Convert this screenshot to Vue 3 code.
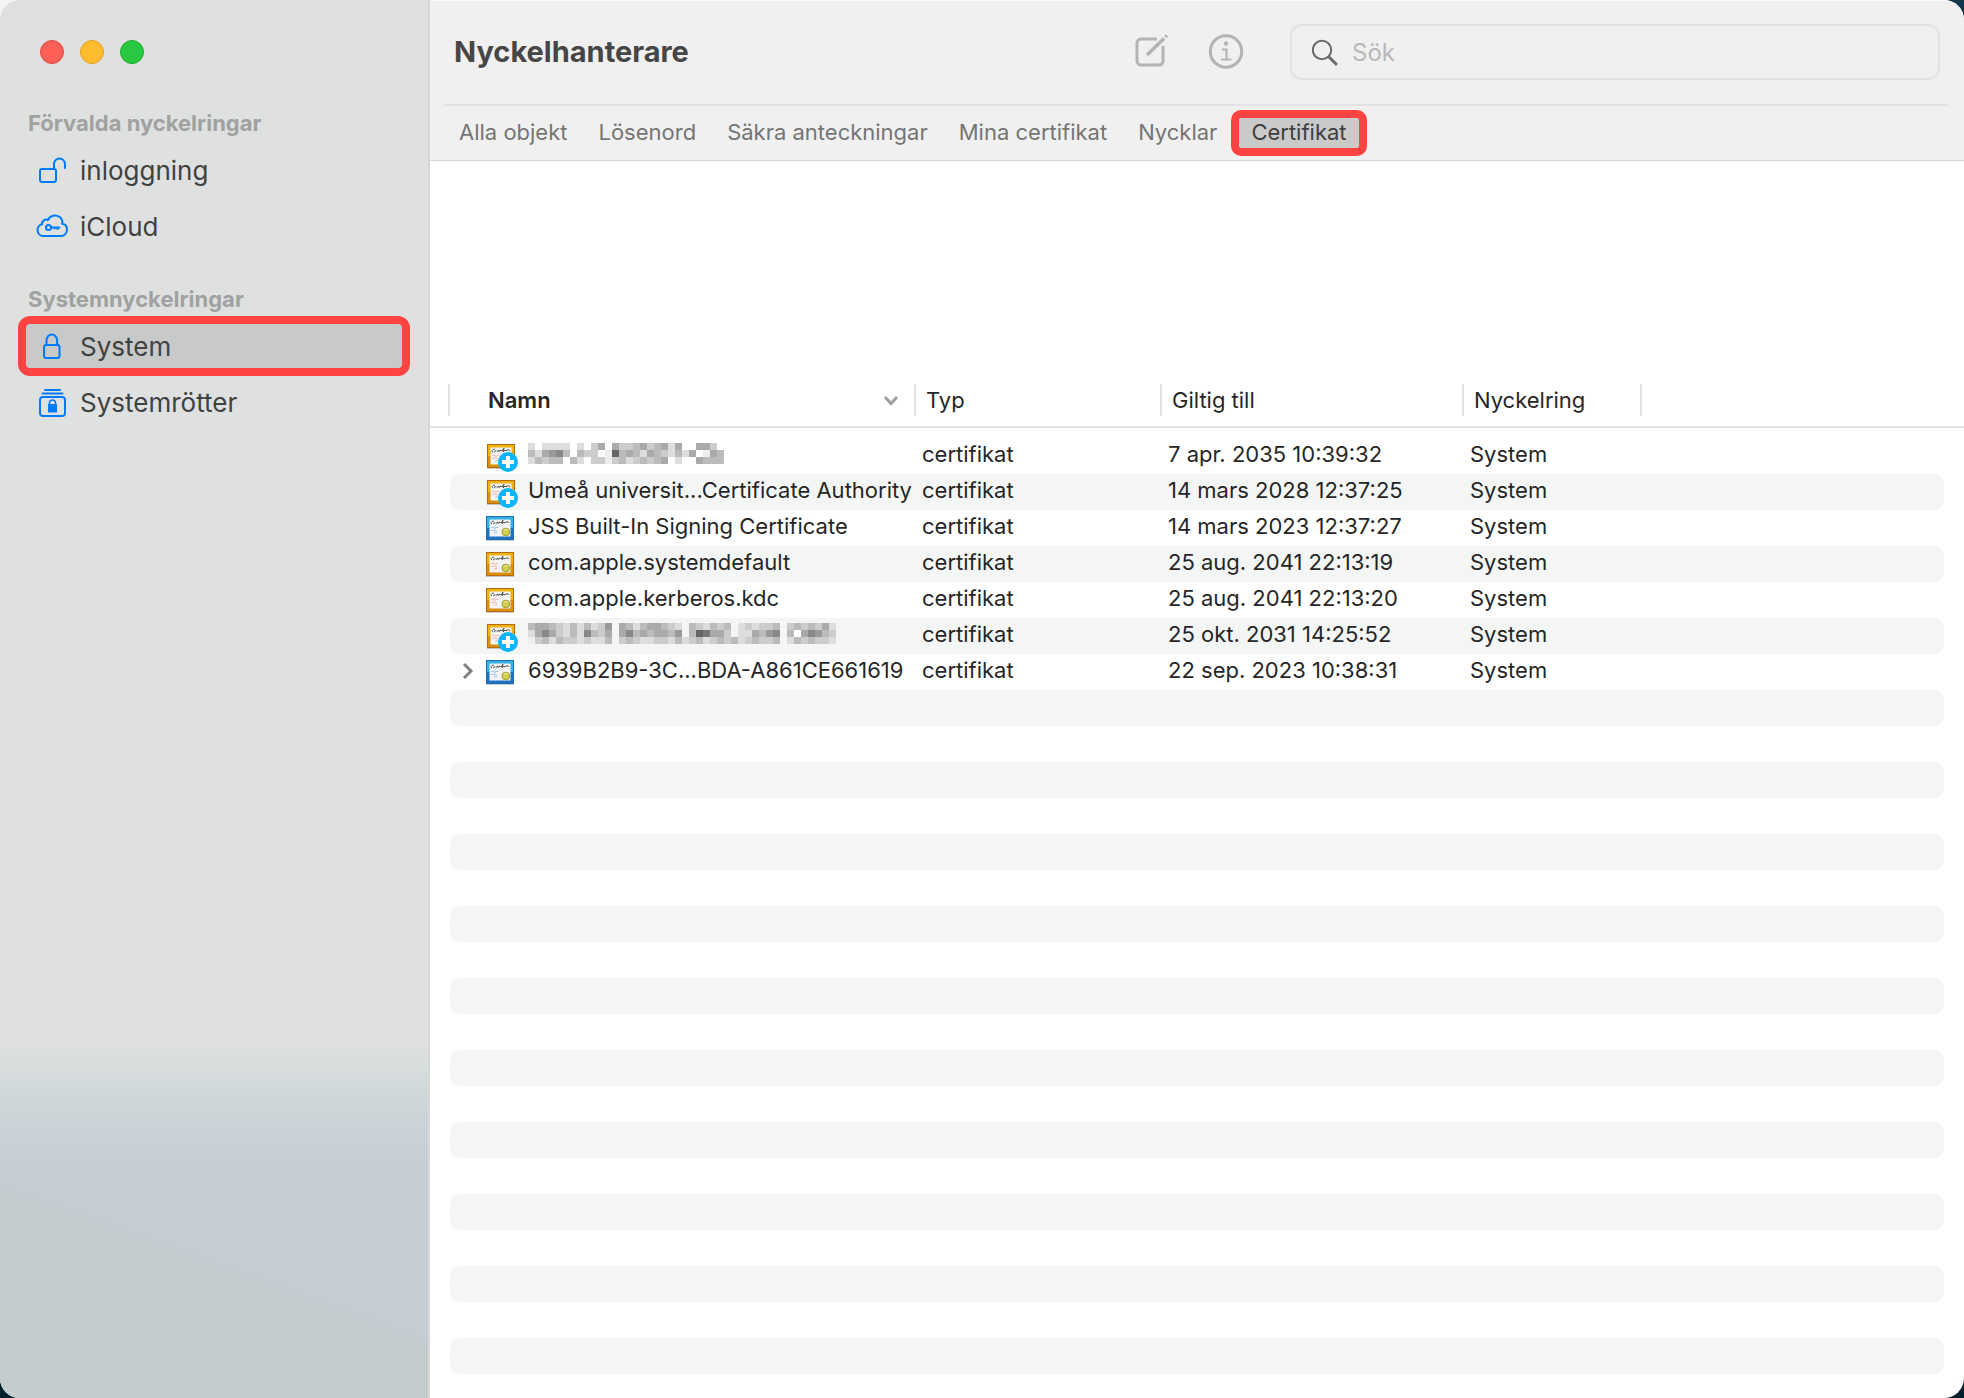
<script setup>
import { ref } from 'vue'

const keychainGroups = [
  {
    title: 'Förvalda nyckelringar',
    items: [
      { label: 'inloggning', icon: 'unlocked' },
      { label: 'iCloud', icon: 'cloud' },
    ],
  },
  {
    title: 'Systemnyckelringar',
    items: [
      { label: 'System', icon: 'locked' },
      { label: 'Systemrötter', icon: 'roots' },
    ],
  },
]

const categories = ['Alla objekt', 'Lösenord', 'Säkra anteckningar', 'Mina certifikat', 'Nycklar', 'Certifikat']

const activeKeychain = ref('System')
const activeCategory = ref('Certifikat')
const query = ref('')

// Each hex digit is the grey level of one mosaic tile; a space leaves the tile clear.
const certificates = [
  {
    mosaic: [
      'd dddd d cafaccbacbadaf aacf',
      'bda98b bcc e6babdabcdbdafeab',
      'dbcbb bd ccecbdcbcba d  abbb',
    ],
    tone: 'gold', trusted: true, expires: '7 apr. 2035 10:39:32',
  },
  { name: 'Umeå universit...Certificate Authority', tone: 'gold', trusted: true, expires: '14 mars 2028 12:37:25' },
  { name: 'JSS Built-In Signing Certificate', tone: 'blue', expires: '14 mars 2023 12:37:27' },
  { name: 'com.apple.systemdefault', tone: 'gold', expires: '25 aug. 2041 22:13:19' },
  { name: 'com.apple.kerberos.kdc', tone: 'gold', expires: '25 aug. 2041 22:13:20' },
  {
    mosaic: [
      'baabcdbdbdc9 abdbaabcd bcdbcb dcdccb cbcbcad',
      'da8acdbd8bca a8babaab9 b67aac ddab98 bfa89bcd',
      'ecbdbccdcddb cbcddccdbdcbdcbcbdcbccb dbcbccdd',
    ],
    tone: 'gold', trusted: true, expires: '25 okt. 2031 14:25:52',
  },
  { name: '6939B2B9-3C...BDA-A861CE661619', tone: 'blue', expandable: true, expires: '22 sep. 2023 10:38:31' },
]

const emptyRows = 19

const grey = (digit) => `#${(digit + digit).repeat(3)}`
</script>

<template>
  <div class="window">
    <aside class="sidebar">
      <div class="lights">
        <button class="light close" type="button" aria-label="Stäng"></button>
        <button class="light minimise" type="button" aria-label="Minimera"></button>
        <button class="light zoom" type="button" aria-label="Zooma"></button>
      </div>

      <nav v-for="group in keychainGroups" :key="group.title" class="group" :aria-label="group.title">
        <h2 class="group-title">{{ group.title }}</h2>
        <button
          v-for="item in group.items"
          :key="item.label"
          type="button"
          class="keychain"
          :class="{ active: item.label === activeKeychain }"
          @click="activeKeychain = item.label"
        >
          <svg v-if="item.icon === 'unlocked'" class="keychain-icon" viewBox="0 0 32 32">
            <rect x="4" y="15" width="16" height="13" rx="2" />
            <path d="M18 15v-5a5.500 5.500 0 0 1 11 0v4" />
          </svg>
          <svg v-else-if="item.icon === 'cloud'" class="keychain-icon" viewBox="0 0 32 32">
            <path d="M7 26a6 6 0 0 1-1-11.800c-.2-3.400 3.200-5.400 6-4.200 2-4.500 7.500-5.800 11.400-3.200 2.400 1.700 3.200 4.300 2.800 7 3 .5 4.800 2.800 4.800 5.600 0 3.600-2.500 6.600-6 6.600z" />
            <circle cx="12.500" cy="17.500" r="2.500" />
            <path d="M15 17.500h8.500M21.500 17.500v1.500M18.500 17.500v1" />
          </svg>
          <svg v-else-if="item.icon === 'locked'" class="keychain-icon" viewBox="0 0 32 32">
            <rect x="8" y="15" width="15.500" height="13" rx="2" />
            <path d="M10.500 15v-4.500a5.300 6 0 0 1 10.600 0V15" />
          </svg>
          <svg v-else class="keychain-icon" viewBox="0 0 32 32">
            <rect x="4" y="11" width="25" height="19" rx="3" />
            <path d="M6.500 7.500h20M9 4h15" />
            <path class="solid" d="M12 18h9v8.500h-9z" />
            <path d="M13.500 18v-1a3 3 0 0 1 6 0v1" stroke-width="1.500" />
          </svg>
          <span>{{ item.label }}</span>
        </button>
      </nav>
    </aside>

    <main class="main">
      <header class="header">
        <div class="titlebar">
          <h1 class="title">Nyckelhanterare</h1>
          <div class="tools">
            <button class="tool" type="button" aria-label="Nytt objekt">
              <svg viewBox="0 0 36 36">
                <path d="M23 5H7a4 4 0 0 0-4 4v18a4 4 0 0 0 4 4h18a4 4 0 0 0 4-4V12" />
                <path d="M13 21 30 4.500" stroke-width="3.500" />
                <path d="m31.500 3 1.500-1.500" stroke-width="3.500" />
              </svg>
            </button>
            <button class="tool" type="button" aria-label="Information">
              <svg viewBox="0 0 36 36">
                <circle cx="18" cy="17.500" r="15.700" />
                <circle class="dot" cx="18" cy="9.500" r="2.200" />
                <path d="M14 15.500h4.500v10M13 25.500h10.500" stroke-width="2" />
              </svg>
            </button>
          </div>
          <label class="search">
            <svg class="search-icon" viewBox="0 0 28 28">
              <circle cx="10" cy="12" r="9.200" />
              <path d="m17 19 7 7" stroke-width="3" />
            </svg>
            <input v-model="query" type="search" placeholder="Sök" aria-label="Sök" />
          </label>
        </div>
        <div class="categories">
          <button
            v-for="category in categories"
            :key="category"
            type="button"
            class="category"
            :class="{ active: category === activeCategory }"
            @click="activeCategory = category"
          >{{ category }}</button>
        </div>
      </header>

      <section class="listing">
        <table class="table">
          <colgroup>
            <col class="col-name" /><col class="col-kind" /><col class="col-date" /><col class="col-ring" /><col />
          </colgroup>
          <thead>
            <tr>
              <th scope="col">
                <div class="heading name-heading">
                  Namn
                  <svg class="sort" viewBox="0 0 16 12"><path d="m2 3 6 6.500L14 3" /></svg>
                </div>
              </th>
              <th scope="col"><div class="heading">Typ</div></th>
              <th scope="col"><div class="heading">Giltig till</div></th>
              <th scope="col"><div class="heading">Nyckelring</div></th>
              <td class="rule"></td>
            </tr>
          </thead>
          <tbody>
            <tr v-for="(cert, index) in certificates" :key="index">
              <td>
                <div class="name-cell">
                  <button v-if="cert.expandable" class="disclosure" type="button" aria-label="Visa mer">
                    <svg viewBox="0 0 12 18"><path d="m2 2 7 7-7 7" /></svg>
                  </button>
                  <svg class="cert" :class="cert.tone" viewBox="0 0 32 28">
                    <g :transform="cert.trusted ? 'translate(1 0)' : null">
                      <rect class="shade" x="0" y="1" width="28" height="24" />
                      <rect class="edge" x="0" y="0" width="28" height="24" />
                      <rect class="frame-top" x="1" y="1" width="26" height="11" />
                      <rect class="frame-bottom" x="1" y="12" width="26" height="11" />
                      <rect class="paper" x="3.500" y="3.500" width="21" height="17" />
                      <path class="script" d="M6 8c-2-1 0-3 2-3M7 8l2-1.500 1 1 2-1.500v1.500l2-1.500 1 1 2-3-1 4 2-2 1 1 2-1.500 2 1.500" />
                      <path class="lines" d="M5 12l2-1 2 1.500 2-1.500 1 1M5 14.500l3-.5 3 1M8 17l3-.5" />
                      <circle class="seal" cx="19.800" cy="16" r="3.800" />
                      <path class="shine" d="M17.500 14.500a3 3 0 0 1 4.500 0" />
                    </g>
                    <g v-if="cert.trusted">
                      <circle class="badge" cx="22" cy="18" r="10" />
                      <path class="plus" d="M22 12v12M16 18h12" />
                    </g>
                  </svg>
                  <svg
                    v-if="cert.mosaic"
                    class="mosaic"
                    :viewBox="`0 0 ${cert.mosaic[0].length * 7} 21`"
                    :width="cert.mosaic[0].length * 7"
                    height="21"
                    role="img"
                    aria-label="Dolt namn"
                  >
                    <template v-for="(line, y) in cert.mosaic" :key="y">
                      <template v-for="(tile, x) in line" :key="x">
                        <rect v-if="tile !== ' '" :x="x * 7" :y="y * 7" width="7" height="7" :fill="grey(tile)" />
                      </template>
                    </template>
                  </svg>
                  <span v-else>{{ cert.name }}</span>
                </div>
              </td>
              <td>certifikat</td>
              <td>{{ cert.expires }}</td>
              <td>System</td>
              <td></td>
            </tr>
            <tr v-for="n in emptyRows" :key="`empty-${n}`" aria-hidden="true">
              <td></td><td></td><td></td><td></td><td></td>
            </tr>
          </tbody>
        </table>
      </section>
    </main>
  </div>
</template>

<style>
body {
  margin: 0;
  background:
    linear-gradient(90deg, #f4f4f4 50%, #14364b 50%) top / 100% 50% no-repeat,
    #04202b;
}
</style>

<style scoped>
.window {
  display: flex;
  min-height: 100vh;
  box-sizing: border-box;
  border-radius: 20px;
  overflow: hidden;
  background: #fff;
  color: #262626;
  font-family: Inter, "Liberation Sans", sans-serif;
  font-size: 22px;
}

button {
  margin: 0;
  padding: 0;
  border: 0;
  background: none;
  color: inherit;
  font: inherit;
}

svg {
  display: block;
  flex: none;
  fill: none;
}

.sidebar {
  flex: none;
  width: 428px;
  border-right: 2px solid #d6d8d7;
  background:
    linear-gradient(20deg, #c5ccce 56%, rgba(197, 204, 206, 0) 60%) bottom / 100% 210px no-repeat,
    linear-gradient(#dfe1e0 0, #dfe1e0 1045px, #cfd7d9 1095px, #c7d1d6 1145px, #c5ccd4 1190px);
}

.lights {
  display: flex;
  gap: 16px;
  padding: 40px 40px 42px;
}

.light {
  width: 24px;
  height: 24px;
  border-radius: 50%;
  border: 1px solid;
}

.close { background: #ff5f57; border-color: #e2463f; }
.minimise { background: #febc2e; border-color: #e0a01f; }
.zoom { background: #28c840; border-color: #1faa2c; }

.group {
  display: flex;
  flex-direction: column;
  padding: 0 18px;
  margin-bottom: 30px;
}

.group-title {
  margin: 0;
  padding-left: 10px;
  line-height: 34px;
  font-size: 22px;
  font-weight: 700;
  color: #a0a2a1;
}

.keychain {
  display: flex;
  align-items: center;
  gap: 12px;
  height: 60px;
  margin-bottom: -4px;
  padding: 0 10px;
  border: 8px solid transparent;
  border-radius: 12px;
  font-size: 26px;
  text-align: left;
  color: #404141;
}

.keychain.active {
  border-color: #ff4343;
  background: #c8c9c9;
}

.keychain-icon {
  width: 32px;
  height: 32px;
  stroke: #007aff;
  stroke-width: 2;
  stroke-linecap: round;
}

.keychain-icon .solid {
  fill: #007aff;
  stroke: none;
}

.main {
  flex: 1;
  min-width: 0;
}

.header {
  border-top: 1px solid #fafafa;
  border-bottom: 1px solid #d8d8d8;
  background: #f0f0f0;
}

.titlebar {
  display: flex;
  align-items: center;
  height: 101px;
  margin: 0 16px 0 14px;
  padding: 0 8px 2px 10px;
  border-bottom: 2px solid #e2e2e2;
}

.title {
  flex: 1;
  margin: 0;
  font-size: 29px;
  font-weight: 700;
  color: #464646;
}

.tools {
  display: flex;
  gap: 38px;
  margin-right: 46px;
}

.tool svg {
  width: 36px;
  height: 36px;
  stroke: #b3b3b3;
  stroke-width: 3;
}

.tool .dot {
  fill: #b3b3b3;
  stroke: none;
}

.search {
  display: flex;
  align-items: center;
  gap: 12px;
  width: 650px;
  height: 56px;
  padding: 0 20px;
  box-sizing: border-box;
  border: 2px solid #e2e2e2;
  border-radius: 12px;
}

.search-icon {
  width: 28px;
  height: 28px;
  stroke: #6a6a6a;
  stroke-width: 2;
  stroke-linecap: round;
}

.search input {
  flex: 1;
  min-width: 0;
  padding: 2px 0 0;
  border: 0;
  outline: 0;
  background: none;
  font: inherit;
  font-size: 24px;
  color: #464646;
}

.search input::placeholder {
  color: #b8b8b8;
}

.categories {
  display: flex;
  align-items: center;
  gap: 1px;
  height: 54px;
  padding-left: 14px;
}

.category {
  padding: 0 7px 2px;
  border: 8px solid transparent;
  border-radius: 10px;
  line-height: 28px;
  color: #757575;
}

.category.active {
  margin-left: -2px;
  padding: 0 12px 2px;
  border-color: #ff4343;
  background: #cacaca;
  color: #404040;
}

.listing {
  padding: 223px 20px 24px;
}

.table {
  width: 100%;
  table-layout: fixed;
  border-collapse: separate;
  border-spacing: 0;
}

.col-name { width: 466px; }
.col-kind { width: 246px; }
.col-date { width: 302px; }
.col-ring { width: 178px; }

th, td {
  padding: 0;
  text-align: left;
  font-weight: 400;
}

thead tr {
  position: relative;
  height: 54px;
  vertical-align: top;
}

.rule::after {
  content: "";
  position: absolute;
  left: -20px;
  right: -20px;
  top: 42px;
  height: 2px;
  background: #e4e4e4;
}

.heading {
  height: 32px;
  padding-left: 10px;
  border-right: 2px solid #e2e2e2;
  line-height: 32px;
}

.name-heading {
  display: flex;
  align-items: center;
  justify-content: space-between;
  margin-left: -2px;
  padding: 0 15px 0 38px;
  border-left: 2px solid #e2e2e2;
  font-weight: 600;
}

.sort {
  width: 16px;
  height: 12px;
  stroke: #a0a0a0;
  stroke-width: 3;
}

tbody td {
  height: 32px;
  padding: 0 0 4px 6px;
  line-height: 32px;
  white-space: nowrap;
}

tbody tr:nth-child(even) td {
  background: #f4f6f5;
}

tbody td:first-child {
  border-radius: 10px 0 0 10px;
}

tbody td:last-child {
  border-radius: 0 10px 10px 0;
}

.name-cell {
  position: relative;
  display: flex;
  gap: 10px;
  height: 32px;
  padding-left: 30px;
}

.disclosure {
  position: absolute;
  left: 6px;
  top: 8px;
}

.disclosure svg {
  width: 12px;
  height: 18px;
  stroke: #808080;
  stroke-width: 3;
}

.cert {
  width: 32px;
  height: 28px;
  margin-top: 6px;
}

.mosaic {
  margin-top: 5px;
  shape-rendering: crispEdges;
}

.shade { fill: rgba(0, 0, 0, 0.2); }
.gold .edge { fill: #b9690c; }
.gold .frame-top { fill: #efb30e; }
.gold .frame-bottom { fill: #d98f0a; }
.blue .edge { fill: #1c6fb4; }
.blue .frame-top { fill: #35b0e2; }
.blue .frame-bottom { fill: #1c74c0; }
.paper { fill: #f3f3f1; }
.script { stroke: #555; stroke-width: 1; }
.gold .lines { stroke: #f0b4b4; }
.blue .lines { stroke: #8fc4f2; }
.seal { fill: #d3d04e; stroke: #9d9b2c; stroke-width: 1; }
.shine { stroke: #f3f2a8; stroke-width: 1; }
.badge { fill: #0ab4ff; }
.plus { stroke: #fff; stroke-width: 4; }
</style>
